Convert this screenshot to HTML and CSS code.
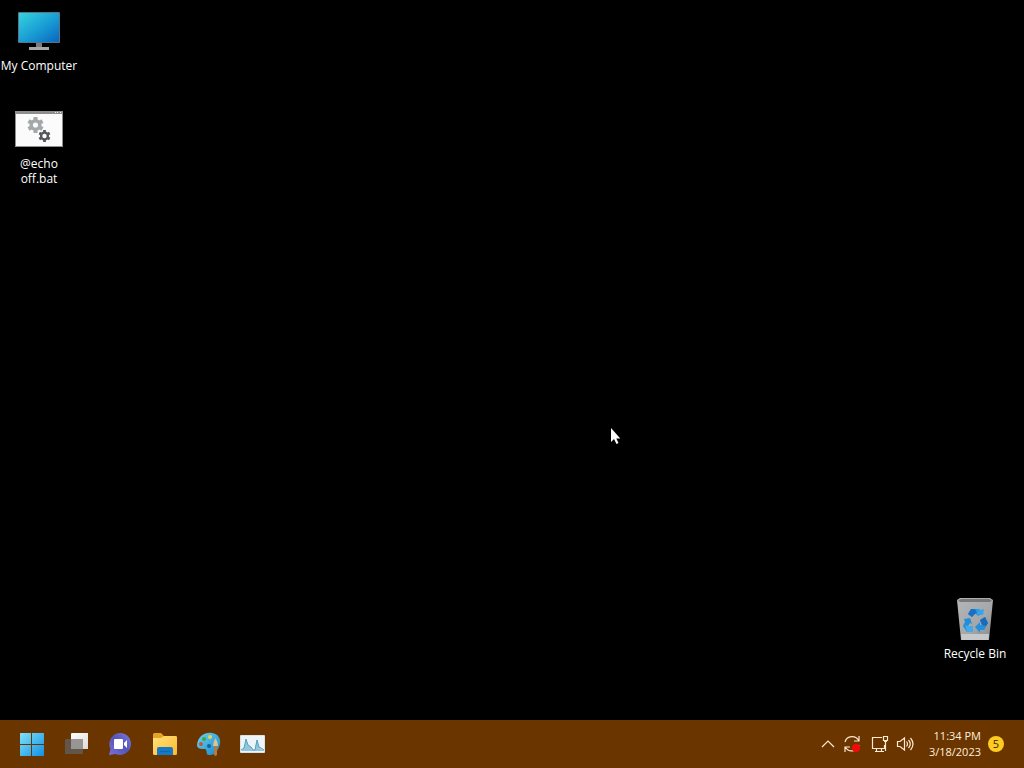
FILE: index.html
```html
<!DOCTYPE html>
<html lang="en">
<head>
<meta charset="utf-8">
<title>Desktop</title>
<link rel="stylesheet" href="styles.css">
</head>
<body>
<main class="desktop">
  <button class="shortcut shortcut-computer">
    <svg class="shortcut-icon" width="48" height="48" viewBox="0 0 48 48" aria-hidden="true">
      <defs>
        <linearGradient id="screen" x1="0" y1="0" x2="1" y2="1"><stop offset="0" stop-color="#35d3de"/><stop offset=".55" stop-color="#189bd4"/><stop offset="1" stop-color="#0b66bd"/></linearGradient>
      </defs>
      <path d="M21 38h6v6h-6z" fill="#777c81"/>
      <path d="M14 43h20v3H14z" fill="#a5a7a9"/>
      <rect x="3" y="8" width="42" height="31" rx="1" fill="#56758a"/>
      <rect x="4" y="9" width="40" height="29" fill="url(#screen)"/>
    </svg>
    <span>My Computer</span>
  </button>
  <button class="shortcut shortcut-batch">
    <svg class="shortcut-icon" width="48" height="48" viewBox="0 0 48 48" aria-hidden="true">
      <rect y="9" width="48" height="36" fill="#8e8e8e"/>
      <rect x="1" y="12" width="46" height="32" fill="#fbfbfb"/>
      <path d="M40 10h1v1h-1zm2 0h1v1h-1zm3 0h1v1h-1z" fill="#eee"/>
      <g fill="none" stroke="#a3a8ab">
        <circle cx="20.500" cy="23" r="4.300" stroke-width="3.400"/>
        <path stroke-width="4" d="M20.500 15v3m0 10v3m-7-12 2.600 1.500m8.800 5 2.600 1.500m-14 0 2.600-1.500m8.800-5 2.600-1.500"/>
      </g>
      <g fill="none" stroke="#55585b">
        <circle cx="29.500" cy="34" r="3.400" stroke-width="2.400"/>
        <path stroke-width="2.800" d="M29.500 28v2.500m0 7V40m-5.200-9 2.200 1.200m6 3.600 2.200 1.200m-10.400 0 2.200-1.200m6-3.600 2.200-1.200"/>
      </g>
    </svg>
    <span>@echo<br>off.bat</span>
  </button>
  <button class="shortcut shortcut-bin">
    <svg class="shortcut-icon" width="48" height="48" viewBox="0 0 48 48" aria-hidden="true">
      <defs>
        <linearGradient id="bin" x1="0" y1="0" x2="1" y2="1"><stop offset="0" stop-color="#b4b6b8"/><stop offset=".6" stop-color="#a5a6a8"/><stop offset="1" stop-color="#898a8c"/></linearGradient>
      </defs>
      <path d="M6 8 9 6h30l3 2-4 40H10z" fill="url(#bin)"/>
      <path d="M7 8.500 10 7h28l3 1.500-2 1.500H9z" fill="#77797b"/>
      <path d="M10 42h28l-.5 6H10.500z" fill="#c6c8ca"/>
      <path d="m17 22 3-5h8l3 5-4 2-3-3-3 4z" fill="#249be6"/>
      <path d="m17 22 3-5h4l2 4-2 1-3 3z" fill="#1a70c4"/>
      <path d="m26 22 6 1 1-6-3 1-2-1z" fill="#35a4e8"/>
      <path d="m13 27 6-1 2 6-2-1-2 3h5v6h-6l-4-6 2-4z" fill="#1f8edc"/>
      <path d="m14 33 3 1h5v6h-6z" fill="#43aaea"/>
      <path d="m29 28 5-3 3 6-4 7h-4v3l-5-6 5-5v3h2z" fill="#258fdb"/>
      <path d="m29 28 5-3 3 6-2 3-4-1z" fill="#1a6abb"/>
    </svg>
    <span>Recycle Bin</span>
  </button>
  <svg class="pointer" width="12" height="19" viewBox="0 0 12 19" aria-hidden="true"><path d="M1 1v14l3-3 2.500 5 2-1-2.200-4.500h4z" fill="#fff"/></svg>
</main>

<footer class="taskbar">
  <nav class="apps" aria-label="Taskbar">
    <button class="app" aria-label="Start">
      <svg width="24" height="24" viewBox="0 0 24 24">
        <defs><linearGradient id="win" gradientUnits="userSpaceOnUse" x1="0" y1="0" x2="24" y2="24"><stop stop-color="#83e4f8"/><stop offset="1" stop-color="#1290e4"/></linearGradient></defs>
        <path d="M0 1.500Q0 1 .5 1H11v11H0zm12-.5h11.500q.5 0 .5.500V12H12zM0 13h11v11H.5q-.5 0-.5-.5zm12 0h12v10.500q0 .5-.5.500H12z" fill="url(#win)"/>
      </svg>
    </button>
    <button class="app" aria-label="Task view">
      <svg width="24" height="24" viewBox="0 0 24 24">
        <defs><linearGradient id="pane" x2="1" y2="1"><stop stop-color="#fff"/><stop offset="1" stop-color="#ddd9d5"/></linearGradient></defs>
        <rect x="7" y="1" width="18" height="16" rx="1" fill="url(#pane)"/>
        <rect x="1" y="7" width="18" height="15" rx="1" fill="#62554c"/>
        <path d="M7 7h12v10H7z" fill="#989692"/>
      </svg>
    </button>
    <button class="app" aria-label="Chat">
      <svg width="24" height="24" viewBox="0 0 24 24">
        <defs><linearGradient id="chat" x1="1" y1="0" x2="0" y2="1"><stop stop-color="#7a7be0"/><stop offset=".5" stop-color="#5555b8"/><stop offset="1" stop-color="#7872dd"/></linearGradient></defs>
        <path d="M12.500 1a11 11 0 1 1-5 21L1 23l1.500-6A11 11 0 0 1 12.500 1z" fill="url(#chat)"/>
        <rect x="6" y="7" width="9" height="10" rx="1" fill="#fff"/>
        <path d="m16 11 3-3v8l-3-3z" fill="#fff"/>
      </svg>
    </button>
    <button class="app" aria-label="File Explorer">
      <svg width="26" height="24" viewBox="0 0 26 24">
        <defs><linearGradient id="folder" x2="1" y2="1"><stop stop-color="#ffe27b"/><stop offset="1" stop-color="#fcb92c"/></linearGradient></defs>
        <path d="M2 2.500Q2 1 3.500 1H10l3 3h11.500Q26 4 26 5.500V12H2z" fill="#e5a421"/>
        <path d="M2 6h8l3-2h11.500Q26 4 26 5.500v16q0 1.500-1.500 1.500h-21Q2 23 2 21.500z" fill="url(#folder)"/>
        <path d="M6 23v-6q0-2 2-2h12q2 0 2 2v6z" fill="#1479c7"/>
        <path d="M9 19h10v1H9z" fill="#0f66b0"/>
      </svg>
    </button>
    <button class="app" aria-label="Paint">
      <svg width="26" height="24" viewBox="0 0 26 24">
        <defs><linearGradient id="palette" x2="1" y2="1"><stop stop-color="#6cd5ef"/><stop offset="1" stop-color="#1686cc"/></linearGradient></defs>
        <path d="M2 13C3 4 10 0 17 1c6 1 9 5 8 11-1 5-5 12-11 11-4 0-1-5-4-6-4 0-8 0-8-4z" fill="url(#palette)"/>
        <circle cx="14" cy="14" r="2" fill="#185f9b"/>
        <circle cx="6" cy="12" r="2" fill="#c7533c"/>
        <circle cx="9" cy="7" r="2" fill="#45a34a"/>
        <circle cx="15" cy="5" r="2" fill="#ead34b"/>
        <path d="M19 14h3v9l-1.500 1-1.500-1z" fill="#b77a3c"/>
        <path d="M18 14q0-4 2.500-8 2.500 4 2.500 8z" fill="#dcc594"/>
      </svg>
    </button>
    <button class="app" aria-label="System monitor">
      <svg width="26" height="24" viewBox="0 0 26 24">
        <rect x="1" y="3" width="25" height="18" rx="1" fill="#d8e2e7"/>
        <rect x="2" y="4" width="23" height="16" fill="#edf5f8"/>
        <path d="m2 19 3-3 2-9 2 6 3 2 2 3h2l2-11 2 8 2 2 3 1v1z" fill="#90c7dd"/>
        <path d="m2 18 3-2 2-9 2 6 3 2 2 3h2l2-10 2 7 2 1 3 2" fill="none" stroke="#5a9fbf"/>
      </svg>
    </button>
  </nav>
  <div class="tray">
    <button class="tray-button tray-small" aria-label="Show hidden icons">
      <svg width="16" height="16" viewBox="0 0 16 16"><path d="m2 11 6-6 6 6" class="line"/></svg>
    </button>
    <button class="tray-button tray-small" aria-label="Windows Update">
      <svg width="18" height="18" viewBox="0 0 18 18"><path d="M2 7C4 0 13 0 16 6m0-5v5h-5M16 10c-2 7-10 8-14 2m5 0H2v5" class="line"/><circle cx="13" cy="13" r="4" fill="#f50a0a"/></svg>
    </button>
    <button class="tray-button tray-wide" aria-label="Network">
      <svg width="18" height="18" viewBox="0 0 18 18"><path d="M11 2.500H1.500v11h12V10M5.500 13.500v3m5-3v3M4 16.500h9M12.500 1.500h4v4h-4zM13 6.500h3M14.500 6v10" class="line"/></svg>
    </button>
    <button class="tray-button tray-volume" aria-label="Volume">
      <svg width="18" height="18" viewBox="0 0 18 18"><path d="M1.500 6.500H4L8.500 3v12L4 11.500H1.500zM10.500 6.500q2 2.500 0 5M12.500 5q3.500 4 0 8M14.500 3q5 6 0 12" class="line"/></svg>
    </button>
    <button class="clock"><span>11:34 PM</span><span>3/18/2023</span></button>
    <button class="badge" aria-label="5 notifications">5</button>
  </div>
</footer>
</body>
</html>
```
FILE: styles.css
```css
* { box-sizing: border-box; }

body {
  display: flex;
  flex-direction: column;
  min-height: 100vh;
  margin: 0;
  background: #000;
  color: #fff;
  font-family: "Open Sans", "Noto Sans", sans-serif;
  font-size: 12px;
}

button {
  padding: 0;
  border: 0;
  background: none;
  color: inherit;
  font: inherit;
}

svg { display: block; }

.desktop {
  position: relative;
  flex: 1;
  overflow: hidden;
}

/* Shortcuts are placed freely on the desktop. */
.shortcut {
  position: absolute;
  display: flex;
  flex-direction: column;
  align-items: center;
  gap: 6px;
  width: 78px;
  line-height: 15px;
  white-space: nowrap;
}

.shortcut-computer { top: 4px; left: 0; }
.shortcut-batch { top: 102px; left: 0; }
.shortcut-bin { right: 10px; bottom: 59px; }

.pointer {
  position: absolute;
  top: 427px;
  left: 610px;
}

.taskbar {
  display: flex;
  align-items: center;
  justify-content: space-between;
  height: 48px;
  padding: 0 20px 0 10px;
  background: #6b3500;
}

.apps,
.tray { display: flex; align-items: center; }

.app,
.tray-button {
  display: flex;
  align-items: center;
  justify-content: center;
}

.app { width: 44px; height: 44px; }
.tray-button { height: 40px; }
.tray-small { width: 24px; }
.tray-wide { width: 32px; }
.tray-volume { width: 18px; }

.line {
  fill: none;
  stroke: #ffe9cf;
  stroke-width: 1.2;
}

.clock {
  display: flex;
  flex-direction: column;
  margin-left: 15px;
  color: #fff0dc;
  font-size: 11px;
  line-height: 16px;
  text-align: right;
}

.badge {
  width: 16px;
  height: 16px;
  margin-left: 7px;
  border-radius: 8px;
  background: #fdcb22;
  color: #3a2500;
  font-size: 11px;
  line-height: 16px;
}
```
